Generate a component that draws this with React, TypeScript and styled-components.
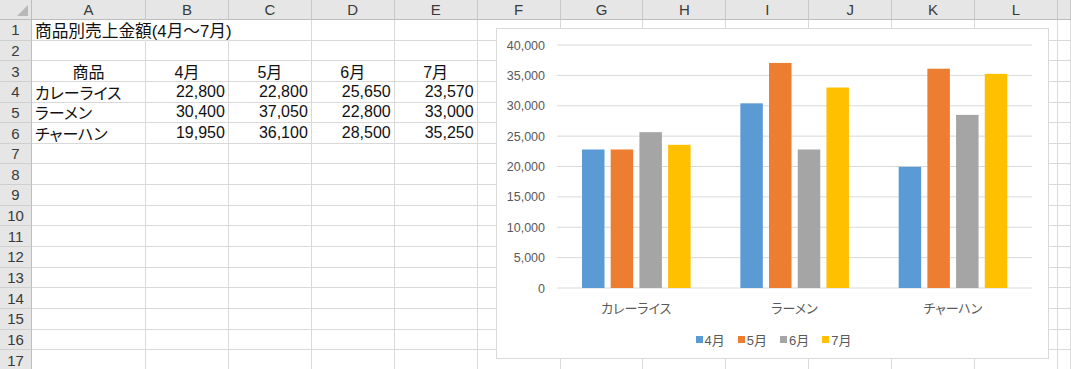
import styled, { createGlobalStyle } from "styled-components";

const GlobalStyle = createGlobalStyle`
  body {
    margin: 0;
    background: #ffffff;
    overflow: hidden;
  }
`;

const columns = ["A", "B", "C", "D", "E", "F", "G", "H", "I", "J", "K", "L", ""];
const months = ["4月", "5月", "6月", "7月"];
const colors = ["#5b9bd5", "#ed7d31", "#a5a5a5", "#ffc000"];
const products = [
  { name: "カレーライス", values: [22800, 22800, 25650, 23570] },
  { name: "ラーメン", values: [30400, 37050, 22800, 33000] },
  { name: "チャーハン", values: [19950, 36100, 28500, 35250] },
];

type CellData = { text: string; align?: "left" | "center" | "right"; overflow?: boolean };

// rows 1..17, columns A..L + trailing
function buildRows(): CellData[][] {
  const rows: CellData[][] = [];
  for (let r = 1; r <= 17; r++) {
    const row: CellData[] = columns.map(() => ({ text: "" }));
    if (r === 1) {
      row[0] = { text: "商品別売上金額(4月〜7月)", overflow: true };
      row[1] = { text: "", overflow: true };
    }
    if (r === 3) {
      row[0] = { text: "商品", align: "center" };
      months.forEach((m, i) => (row[i + 1] = { text: m, align: "center" }));
    }
    if (r >= 4 && r <= 6) {
      const p = products[r - 4];
      row[0] = { text: p.name };
      p.values.forEach((v, i) => (row[i + 1] = { text: v.toLocaleString("en-US"), align: "right" }));
    }
    rows.push(row);
  }
  return rows;
}

const Sheet = styled.div`
  position: relative;
  width: 1071px;
  height: 369px;
  overflow: hidden;
  display: grid;
  grid-template-columns: 32px 114px repeat(11, 82.92px) 1fr;
  grid-template-rows: 20px repeat(17, 20.65px);
  font-family: "Liberation Sans", "Noto Sans CJK JP", sans-serif;
`;

const Corner = styled.div`
  position: relative;
  background: #e6e6e6;
  border-right: 1px solid #bdbdbd;
  border-bottom: 1px solid #bdbdbd;
  box-sizing: border-box;
  &::after {
    content: "";
    position: absolute;
    right: 3px;
    bottom: 3px;
    border-style: solid;
    border-width: 0 0 11px 11px;
    border-color: transparent transparent #b8b8b8 transparent;
  }
`;

const ColHeader = styled.div`
  background: #e6e6e6;
  border-right: 1px solid #c8c8c8;
  border-bottom: 1px solid #bdbdbd;
  box-sizing: border-box;
  display: flex;
  align-items: center;
  justify-content: center;
  font-size: 15px;
  color: #3a3a3a;
`;

const RowHeader = styled.div`
  background: #e6e6e6;
  border-right: 1px solid #bdbdbd;
  border-bottom: 1px solid #cfcfcf;
  box-sizing: border-box;
  display: flex;
  align-items: center;
  justify-content: center;
  font-size: 15px;
  color: #3a3a3a;
`;

const Cell = styled.div<{ $align: string; $overflow: boolean }>`
  position: relative;
  border-right: 1px solid ${(p) => (p.$overflow ? "transparent" : "#d9d9d9")};
  border-bottom: 1px solid #d9d9d9;
  box-sizing: border-box;
  display: flex;
  align-items: center;
  justify-content: ${(p) =>
    p.$align === "center" ? "center" : p.$align === "right" ? "flex-end" : "flex-start"};
  padding: 0 3px;
  font-size: ${(p) => (p.$overflow ? "16.7px" : "16px")};
  color: #111111;
  white-space: nowrap;
  overflow: visible;
  z-index: ${(p) => (p.$overflow ? 1 : 0)};
  font-feature-settings: ${(p) => (p.$overflow ? "normal" : '"palt"')};
`;

const ChartBox = styled.div`
  position: absolute;
  left: 496px;
  top: 28px;
  width: 553px;
  height: 331px;
  box-sizing: border-box;
  background: #ffffff;
  border: 1px solid #d9d9d9;
  z-index: 2;
  display: flex;
  flex-direction: column;
`;

const Legend = styled.div`
  display: flex;
  justify-content: center;
  align-items: center;
  gap: 13px;
  height: 20px;
  margin-left: 2px;
`;

const LegendItem = styled.div`
  display: flex;
  align-items: center;
  gap: 2px;
  font-family: "Liberation Sans", "Noto Sans CJK JP", sans-serif;
  font-size: 13px;
  color: #595959;
`;

const Swatch = styled.span<{ $color: string }>`
  width: 7px;
  height: 7px;
  background: ${(p) => p.$color};
`;

const PLOT_LEFT = 60;
const PLOT_RIGHT = 535;
const ZERO_Y = 259;
const SCALE = 243 / 40000;
const CAT_W = (PLOT_RIGHT - PLOT_LEFT) / 3;

function Chart() {
  const ticks = [0, 5000, 10000, 15000, 20000, 25000, 30000, 35000, 40000];
  return (
    <ChartBox>
      <svg width={551} height={300} style={{ display: "block" }}>
        {ticks.map((t) => {
          const y = ZERO_Y - t * SCALE;
          return (
            <g key={t}>
              <line x1={PLOT_LEFT} x2={PLOT_RIGHT} y1={y} y2={y} stroke="#d9d9d9" strokeWidth={1} />
              <text
                x={48}
                y={y + 4.5}
                textAnchor="end"
                fontFamily="Liberation Sans, sans-serif"
                fontSize={12.5}
                fill="#595959"
              >
                {t.toLocaleString("en-US")}
              </text>
            </g>
          );
        })}
        {products.map((p, c) => {
          const gx = PLOT_LEFT + c * CAT_W;
          return (
            <g key={p.name}>
              {p.values.map((v, s) => {
                const h = v * SCALE;
                return (
                  <rect
                    key={s}
                    x={gx + 25 + s * 28.7}
                    y={ZERO_Y - h}
                    width={22.5}
                    height={h}
                    fill={colors[s]}
                  />
                );
              })}
              <text
                x={gx + CAT_W / 2}
                y={284}
                textAnchor="middle"
                fontFamily="Noto Sans CJK JP, sans-serif"
                fontSize={13}
                fill="#595959"
                style={{ fontFeatureSettings: '"palt"' }}
              >
                {p.name}
              </text>
            </g>
          );
        })}
      </svg>
      <Legend>
        {months.map((m, i) => (
          <LegendItem key={m}>
            <Swatch $color={colors[i]} />
            {m}
          </LegendItem>
        ))}
      </Legend>
    </ChartBox>
  );
}

export default function App() {
  const rows = buildRows();
  return (
    <>
      <GlobalStyle />
      <Sheet>
        <Corner />
        {columns.map((c, i) => (
          <ColHeader key={"h" + i}>{c}</ColHeader>
        ))}
        {rows.map((row, r) => [
          <RowHeader key={"r" + r}>{r + 1}</RowHeader>,
          ...row.map((cell, i) => (
            <Cell
              key={r + "-" + i}
              $align={cell.align ?? "left"}
              $overflow={!!cell.overflow}
            >
              {cell.text}
            </Cell>
          )),
        ])}
        <Chart />
      </Sheet>
    </>
  );
}
